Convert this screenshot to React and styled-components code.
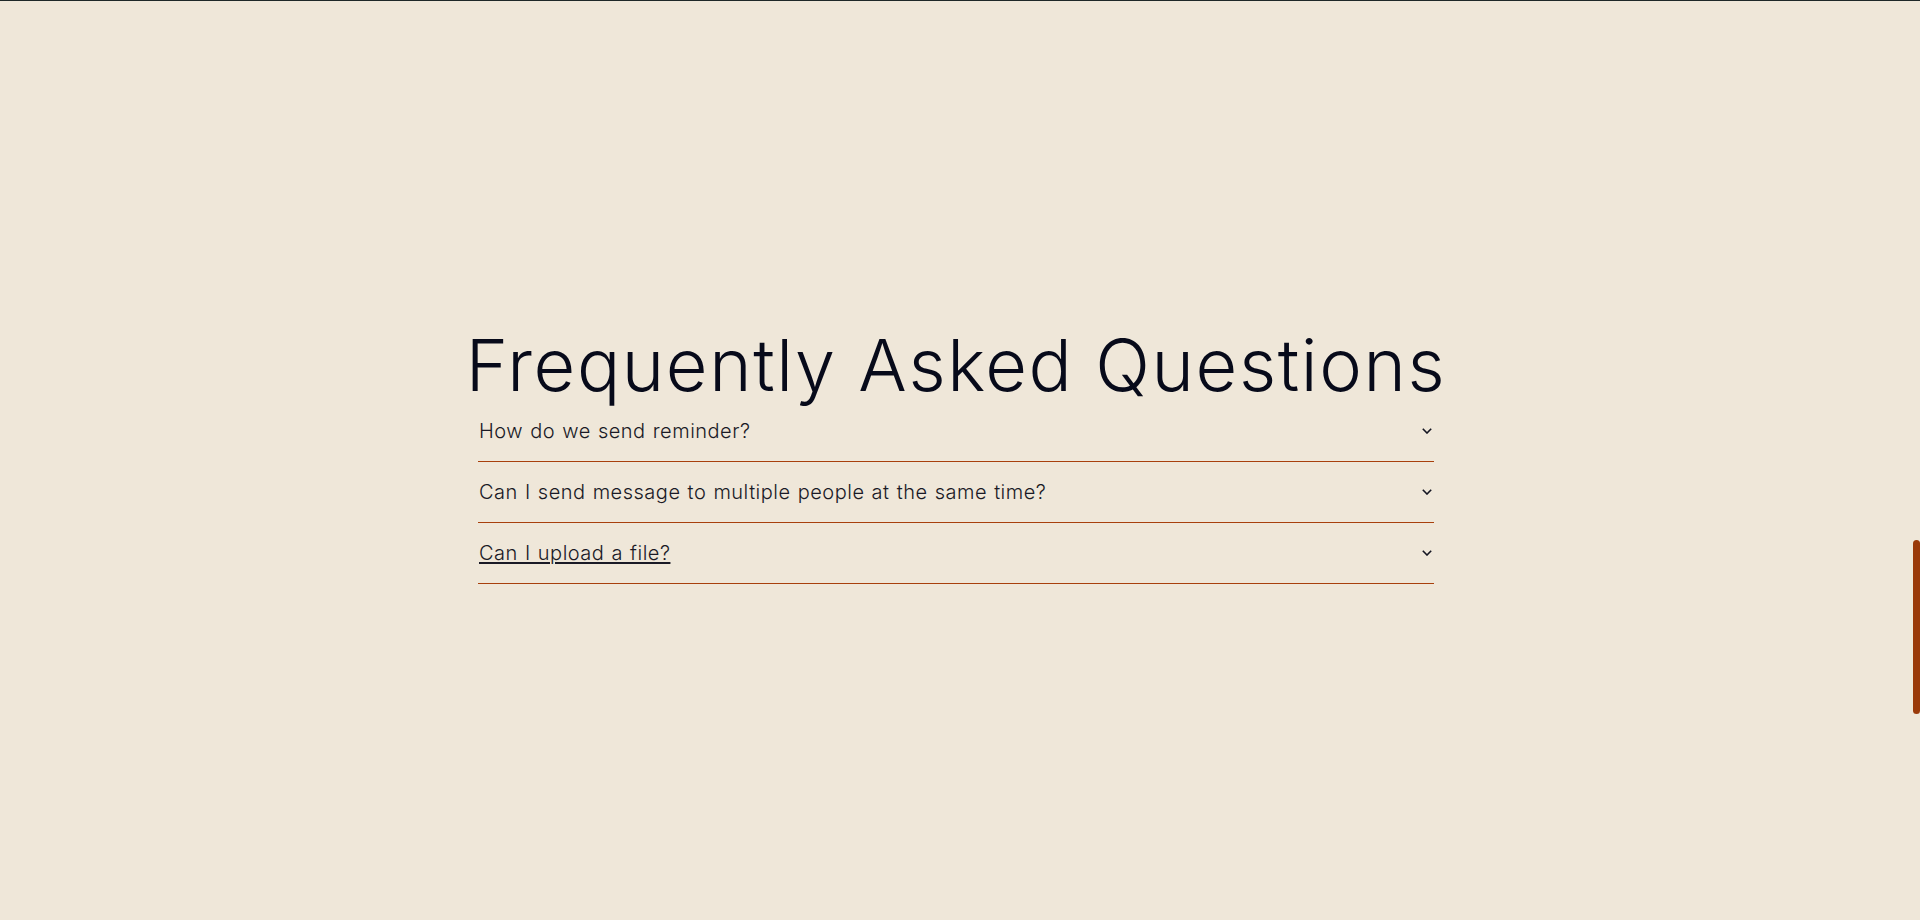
import React from "react";
import styled, { createGlobalStyle } from "styled-components";

const GlobalStyle = createGlobalStyle`
  html, body {
    margin: 0;
    padding: 0;
    height: 100%;
    overflow: hidden;
    background-color: #efe7d9;
  }
  * {
    box-sizing: border-box;
  }
`;

const questions = [
  { q: "How do we send reminder?" },
  { q: "Can I send message to multiple people at the same time?" },
  { q: "Can I upload a file?", hover: true },
];

const Chevron = () => (
  <svg width="10" height="6" viewBox="0 0 10 6" fill="none">
    <path d="M0.8 0.8 5 5 9.2 0.8" stroke="#141522" strokeWidth="1.6" />
  </svg>
);

const App = () => {
  return (
    <>
      <GlobalStyle />
      <Page>
        <TopRule />
        <FaqSection>
          <Title>Frequently Asked Questions</Title>
          <List>
            {questions.map((item) => (
              <Row key={item.q}>
                <Question $hover={item.hover}>{item.q}</Question>
                <Chevron />
              </Row>
            ))}
          </List>
        </FaqSection>
        <ScrollThumb />
      </Page>
    </>
  );
};

const Page = styled.div`
  width: calc(100% - 8px);
  height: 100vh;
  display: flex;
  flex-direction: column;
  font-family: "Inter", "Liberation Sans", sans-serif;
`;

const TopRule = styled.div`
  height: 1px;
  width: calc(100% + 8px);
  background: #1e2828;
`;

const FaqSection = styled.section`
  flex: 1;
  display: flex;
  flex-direction: column;
  align-items: center;
  padding-top: 328px;
`;

const Title = styled.h1`
  margin: 0;
  font-size: 72px;
  font-weight: 300;
  line-height: 72px;
  color: #070a1a;
  letter-spacing: 1.6px;
`;

const List = styled.div`
  width: 50%;
`;

const Row = styled.div`
  height: 61px;
  display: flex;
  align-items: center;
  justify-content: space-between;
  padding: 0 2px 0 1px;
  border-bottom: 1px solid #a8400c;
`;

const Question = styled.span`
  font-size: 20px;
  font-weight: 300;
  color: #1a1a26;
  letter-spacing: 0.5px;
  word-spacing: 1px;
  text-decoration: ${(p) => (p.$hover ? "underline" : "none")};
  text-underline-offset: 2px;
  text-decoration-thickness: 1.5px;
`;

const ScrollThumb = styled.div`
  position: fixed;
  right: 0;
  top: 540px;
  width: 7px;
  height: 174px;
  border-radius: 4px;
  background: #9a3a0a;
`;

export default App;
